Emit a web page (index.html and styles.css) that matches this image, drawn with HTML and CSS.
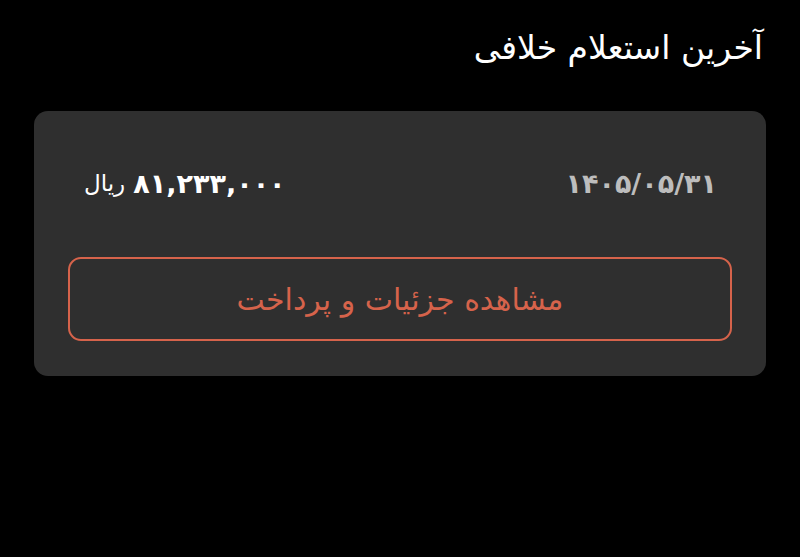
FILE: index.html
```html
<!DOCTYPE html>
<html lang="fa" dir="rtl">
<head>
<meta charset="utf-8">
<link rel="stylesheet" href="styles.css">
</head>
<body>
<main class="page">
  <h1 class="title">آخرین استعلام خلافی</h1>
  <section class="card">
    <div class="row">
      <span class="date">۱۴۰۵/۰۵/۳۱</span>
      <span class="amount"><b class="num">۸۱,۲۳۳,۰۰۰</b> <span class="unit">ریال</span></span>
    </div>
    <button class="btn">مشاهده جزئیات و پرداخت</button>
  </section>
</main>
</body>
</html>
```
FILE: styles.css
```css
html, body {
  margin: 0;
  background: #000;
  height: 100%;
}
body {
  font-family: "DejaVu Sans", "Noto Sans", sans-serif;
  color: #fff;
}
.page {
  padding: 0 34px;
}
.title {
  margin: 0;
  padding: 26px 3px 0 0;
  height: 111px;
  box-sizing: border-box;
  font-size: 33px;
  font-weight: normal;
  line-height: 44px;
  color: #fff;
}
.card {
  background: #2f2f2f;
  border-radius: 14px;
  padding: 0 34px 35px;
  display: flex;
  flex-direction: column;
}
.row {
  display: flex;
  justify-content: space-between;
  align-items: center;
  height: 146px;
  padding: 0 15px 2px 16px;
  box-sizing: border-box;
}
.date {
  font-size: 27px;
  font-weight: bold;
  color: #bdbdbd;
}
.amount {
  display: flex;
  align-items: center;
  gap: 8px;
}
.num {
  font-size: 27px;
  font-weight: bold;
  color: #fff;
}
.unit {
  font-size: 23px;
  color: #fff;
}
.btn {
  font-family: inherit;
  height: 84px;
  background: transparent;
  border: 2px solid #d6634b;
  border-radius: 13px;
  color: #d6634b;
  font-size: 30px;
  cursor: pointer;
}
```
